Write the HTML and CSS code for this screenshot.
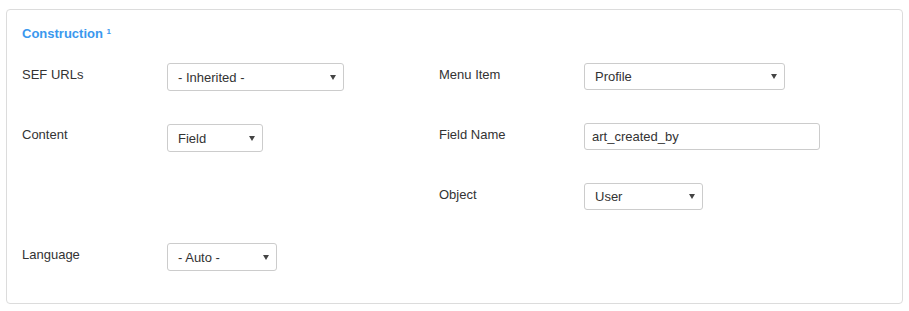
FILE: index.html
```html
<!DOCTYPE html>
<html>
<head>
<meta charset="utf-8">
<link rel="stylesheet" href="styles.css">
</head>
<body>
<div class="panel">
  <div class="legend">Construction <sup class="sup">1</sup></div>
  <div class="grid">
    <div class="label">SEF URLs</div>
    <div class="ctl"><div class="select w-sef"><span>- Inherited -</span><svg class="caret" width="6" height="5" viewBox="0 0 6 5"><path d="M0 0H6L3 5Z" fill="#444"/></svg></div></div>
    <div class="label">Menu Item</div>
    <div class="ctl"><div class="select w-profile"><span>Profile</span><svg class="caret" width="6" height="5" viewBox="0 0 6 5"><path d="M0 0H6L3 5Z" fill="#444"/></svg></div></div>

    <div class="label">Content</div>
    <div class="ctl"><div class="select w-field"><span>Field</span><svg class="caret" width="6" height="5" viewBox="0 0 6 5"><path d="M0 0H6L3 5Z" fill="#444"/></svg></div></div>
    <div class="label">Field Name</div>
    <div class="ctl"><div class="input w-input">art_created_by</div></div>

    <div class="label"></div>
    <div class="ctl"></div>
    <div class="label">Object</div>
    <div class="ctl"><div class="select w-user"><span>User</span><svg class="caret" width="6" height="5" viewBox="0 0 6 5"><path d="M0 0H6L3 5Z" fill="#444"/></svg></div></div>

    <div class="label">Language</div>
    <div class="ctl"><div class="select w-lang"><span>- Auto -</span><svg class="caret" width="6" height="5" viewBox="0 0 6 5"><path d="M0 0H6L3 5Z" fill="#444"/></svg></div></div>
    <div class="label"></div>
    <div class="ctl"></div>
  </div>
</div>
</body>
</html>
```

FILE: styles.css
```css
html, body {
  margin: 0;
  padding: 0;
  background: #fff;
}
body {
  padding: 9px 6px 7px 6px;
  font-family: "Liberation Sans", Arial, sans-serif;
  font-size: 13px;
  color: #333;
}
.panel {
  border: 1px solid #dcdcdc;
  border-radius: 4px;
  padding: 15px 15px 0 15px;
  box-sizing: border-box;
  height: 295px;
}
.legend {
  color: #3a98ee;
  font-weight: bold;
  font-size: 13px;
  line-height: 18px;
}
.sup {
  font-size: 8px;
  vertical-align: top;
  position: relative;
  top: -2px;
}
.grid {
  margin-top: 20px;
  display: grid;
  grid-template-columns: 145px 272px 145px 1fr;
  grid-auto-rows: 60px;
}
.label {
  line-height: 18px;
  margin-top: 3px;
}
.select, .input {
  box-sizing: border-box;
  height: 28px;
  border: 1px solid #cccccc;
  border-radius: 3px;
  background: #fff;
  display: flex;
  align-items: center;
  padding: 0 7px 0 10px;
  line-height: 18px;
}
.select span {
  flex: 1;
  padding-top: 1px;
}
.caret {
  flex: none;
}
.input {
  padding-left: 7px;
  height: 27px;
}
.w-sef { width: 177px; }
.w-field { width: 96px; margin-top: 1px; }
.w-lang { width: 110px; }
.w-profile { width: 201px; height: 27px; }
.w-input { width: 236px; }
.w-user { width: 119px; height: 27px; }
```
